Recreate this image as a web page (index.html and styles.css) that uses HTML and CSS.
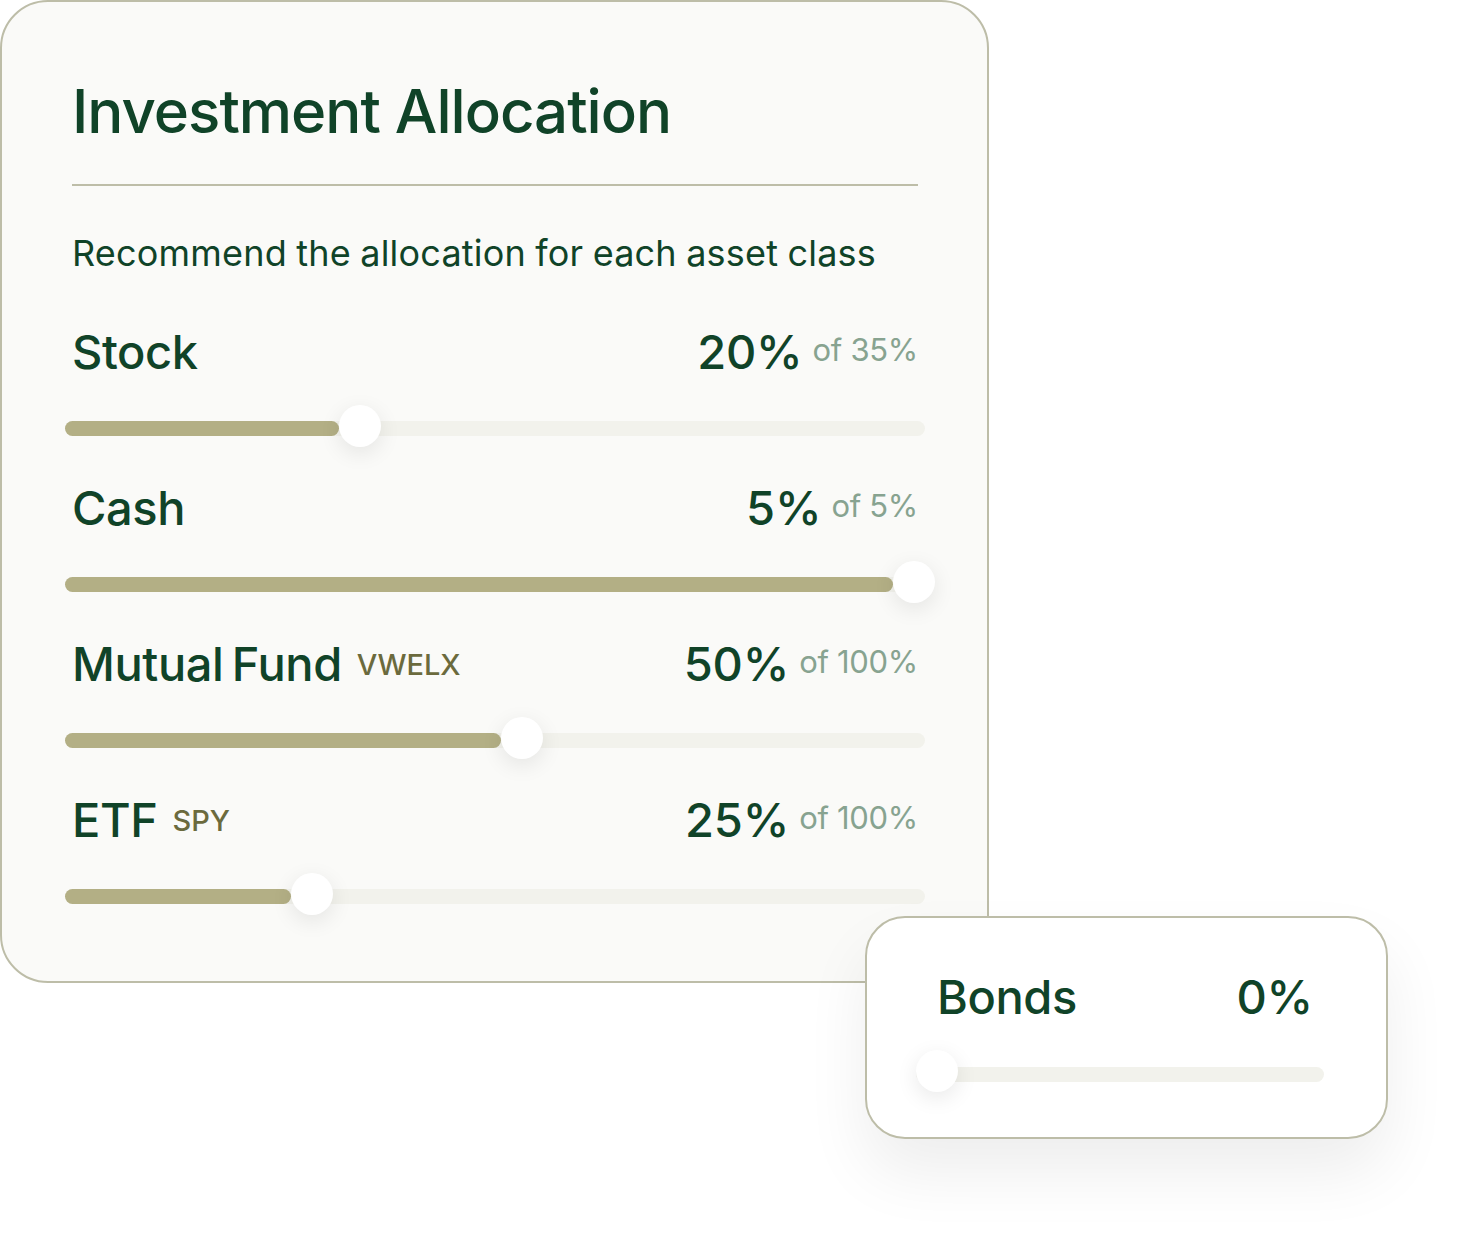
FILE: index.html
```html
<!DOCTYPE html>
<html lang="en">
<head>
<meta charset="utf-8">
<title>Investment Allocation</title>
<link rel="stylesheet" href="styles.css">
</head>
<body>
<div class="stage">
  <section class="card">
    <h1 class="title">Investment Allocation</h1>
    <div class="divider"></div>
    <p class="subtitle">Recommend the allocation for each asset class</p>

    <div class="row">
      <div class="row-head">
        <div class="label"><span class="name">Stock</span></div>
        <div class="value"><span class="pct">20%</span><span class="of">of 35%</span></div>
      </div>
      <div class="track"><div class="fill" style="width:31.9%"></div><div class="thumb" style="left:31.9%"></div></div>
    </div>

    <div class="row">
      <div class="row-head">
        <div class="label"><span class="name">Cash</span></div>
        <div class="value"><span class="pct">5%</span><span class="of">of 5%</span></div>
      </div>
      <div class="track"><div class="fill" style="width:96.3%"></div><div class="thumb" style="left:96.3%"></div></div>
    </div>

    <div class="row">
      <div class="row-head">
        <div class="label"><span class="name">Mutual Fund</span><span class="ticker">VWELX</span></div>
        <div class="value"><span class="pct">50%</span><span class="of">of 100%</span></div>
      </div>
      <div class="track"><div class="fill" style="width:50.7%"></div><div class="thumb" style="left:50.7%"></div></div>
    </div>

    <div class="row">
      <div class="row-head">
        <div class="label"><span class="name">ETF</span><span class="ticker">SPY</span></div>
        <div class="value"><span class="pct">25%</span><span class="of">of 100%</span></div>
      </div>
      <div class="track"><div class="fill" style="width:26.3%"></div><div class="thumb" style="left:26.3%"></div></div>
    </div>
  </section>

  <section class="bonds">
    <div class="row-head">
      <div class="label"><span class="name">Bonds</span></div>
      <div class="value"><span class="pct">0%</span></div>
    </div>
    <div class="track bonds-track"><div class="fill" style="width:0%"></div><div class="thumb" style="left:0%"></div></div>
  </section>
</div>
</body>
</html>
```

FILE: styles.css
```css
* { box-sizing: border-box; }

html, body {
  margin: 0;
  padding: 0;
  background: #ffffff;
}

body {
  font-family: Inter, "Noto Sans", "Liberation Sans", sans-serif;
  color: #104328;
}

.stage {
  position: relative;
  width: 1461px;
  height: 1253px;
}

.card {
  width: 989px;
  height: 983px;
  border: 2px solid #bdbda8;
  border-radius: 48px;
  background: #fafaf8;
  padding: 73px 69px 0 70px;
}

.title {
  margin: 0;
  font-size: 60px;
  line-height: 72px;
  font-weight: 500;
  letter-spacing: -1px;
}

.divider {
  height: 2px;
  background: #bdbda8;
  margin-top: 37px;
}

.subtitle {
  margin: 45px 0 0;
  font-size: 36px;
  line-height: 44px;
  font-weight: 400;
  letter-spacing: 0.2px;
  word-spacing: -1px;
}

.row {
  margin-top: 49px;
}

.row + .row {
  margin-top: 44px;
}

.row-head {
  display: flex;
  justify-content: space-between;
  align-items: center;
  height: 56px;
}

.label {
  display: flex;
  align-items: center;
  gap: 15px;
}

.name {
  font-size: 47px;
  line-height: 56px;
  font-weight: 500;
  letter-spacing: -0.4px;
  word-spacing: -4px;
}

.ticker {
  font-size: 29px;
  line-height: 36px;
  font-weight: 500;
  color: #6b6a3d;
  margin-top: 2px;
}

.value {
  display: flex;
  align-items: center;
  gap: 10px;
}

.pct {
  font-size: 47px;
  line-height: 56px;
  font-weight: 500;
  letter-spacing: -0.2px;
}

.of {
  font-size: 31px;
  line-height: 40px;
  font-weight: 400;
  color: #87a390;
  letter-spacing: -0.3px;
  margin-bottom: 4px;
}

.track {
  position: relative;
  height: 15px;
  margin: 41px -7px 0;
  border-radius: 8px;
  background: #f2f2ec;
}

.fill {
  height: 100%;
  border-radius: 8px;
  background: #b3af85;
}

.thumb {
  position: absolute;
  top: -16px;
  width: 42px;
  height: 42px;
  border-radius: 50%;
  background: #ffffff;
  box-shadow: 0 6px 22px rgba(0, 0, 0, 0.09);
}

.bonds {
  position: absolute;
  left: 865px;
  top: 916px;
  width: 523px;
  height: 223px;
  border: 2px solid #bdbda8;
  border-radius: 40px;
  background: #ffffff;
  padding: 51px 73px 0 70px;
  box-shadow: 0 34px 64px rgba(0, 0, 0, 0.07);
}

.bonds-track {
  margin: 42px -11px 0 -21px;
}

.bonds-track .thumb {
  top: -17px;
}
```
